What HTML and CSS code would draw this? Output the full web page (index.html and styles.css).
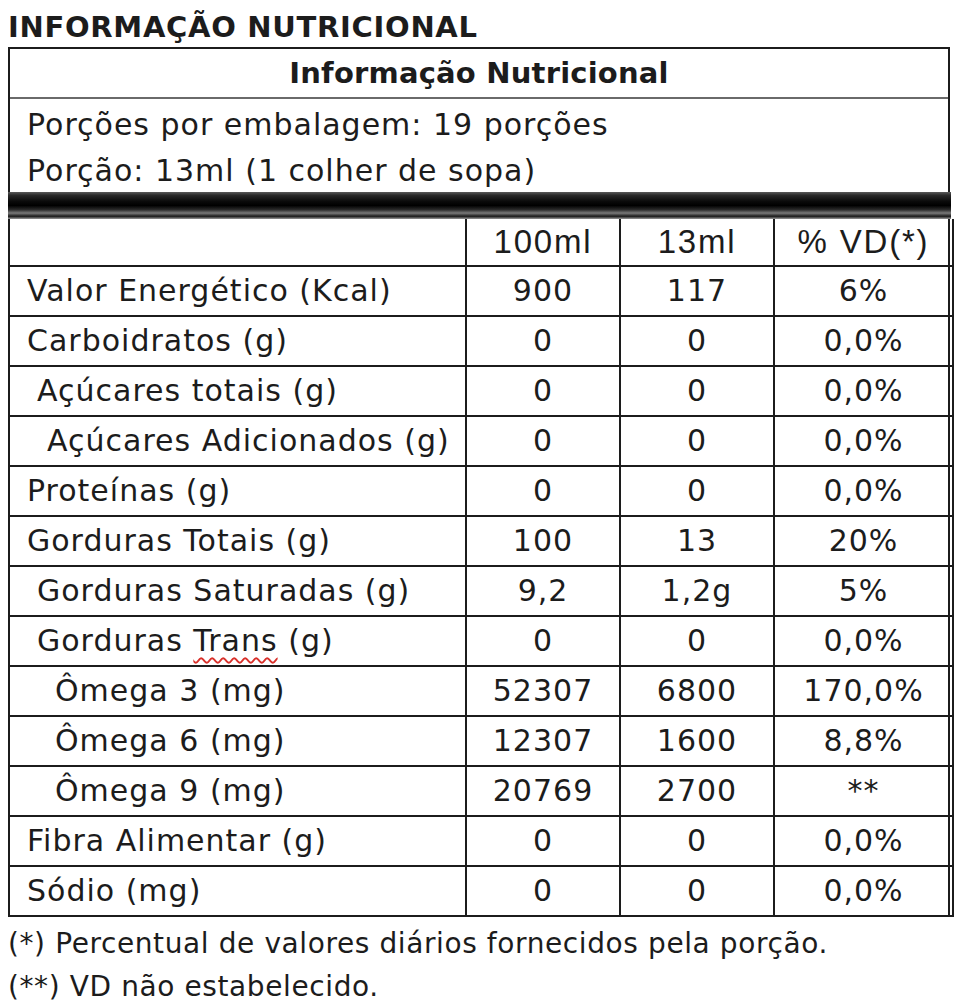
FILE: index.html
```html
<!DOCTYPE html>
<html lang="pt-BR">
<head>
<meta charset="utf-8">
<title>Informação Nutricional</title>
<link rel="stylesheet" href="styles.css">
</head>
<body>
<div class="page">
  <h1 class="title">INFORMAÇÃO NUTRICIONAL</h1>
  <div class="panel">
    <div class="panel-head">Informação Nutricional</div>
    <div class="portion">
      <div class="portion-line">Porções por embalagem: 19 porções</div>
      <div class="portion-line">Porção: 13ml (1 colher de sopa)</div>
    </div>
    <div class="bar"></div>
    <table class="facts">
      <colgroup>
        <col class="c-label"><col class="c-num"><col class="c-num"><col class="c-vd">
      </colgroup>
      <tr class="hdr"><td></td><td>100ml</td><td>13ml</td><td>% VD(*)</td></tr>
      <tr><td class="lbl">Valor Energético (Kcal)</td><td>900</td><td>117</td><td>6%</td></tr>
      <tr><td class="lbl">Carboidratos (g)</td><td>0</td><td>0</td><td>0,0%</td></tr>
      <tr><td class="lbl i1">Açúcares totais (g)</td><td>0</td><td>0</td><td>0,0%</td></tr>
      <tr><td class="lbl i2">Açúcares Adicionados (g)</td><td>0</td><td>0</td><td>0,0%</td></tr>
      <tr><td class="lbl">Proteínas (g)</td><td>0</td><td>0</td><td>0,0%</td></tr>
      <tr><td class="lbl">Gorduras Totais (g)</td><td>100</td><td>13</td><td>20%</td></tr>
      <tr><td class="lbl i1">Gorduras Saturadas (g)</td><td>9,2</td><td>1,2g</td><td>5%</td></tr>
      <tr><td class="lbl i1">Gorduras <span class="spell">Trans</span> (g)</td><td>0</td><td>0</td><td>0,0%</td></tr>
      <tr><td class="lbl i3">Ômega 3 (mg)</td><td>52307</td><td>6800</td><td>170,0%</td></tr>
      <tr><td class="lbl i3">Ômega 6 (mg)</td><td>12307</td><td>1600</td><td>8,8%</td></tr>
      <tr><td class="lbl i3">Ômega 9 (mg)</td><td>20769</td><td>2700</td><td>**</td></tr>
      <tr><td class="lbl">Fibra Alimentar (g)</td><td>0</td><td>0</td><td>0,0%</td></tr>
      <tr><td class="lbl">Sódio (mg)</td><td>0</td><td>0</td><td>0,0%</td></tr>
    </table>
  </div>
  <div class="notes">
    <p>(*) Percentual de valores diários fornecidos pela porção.</p>
    <p>(**) VD não estabelecido.</p>
  </div>
</div>
</body>
</html>
```

FILE: styles.css
```css
* { box-sizing: border-box; }
html, body { margin: 0; padding: 0; background: #fff; }
body {
  font-family: "DejaVu Sans", "Open Sans", sans-serif;
  color: #1c1c1c;
}
.page {
  padding: 8px 6px 0 8px;
  width: 956px;
}
.title {
  margin: 0;
  font-size: 29px;
  font-weight: 700;
  line-height: 39px;
  height: 39px;
  letter-spacing: 0.7px;
}
.panel {
  border: 2px solid #1c1c1c;
  border-bottom: none;
  width: 942px;
}
.panel-head {
  height: 50px;
  line-height: 48px;
  text-align: center;
  font-weight: 700;
  font-size: 29px;
  letter-spacing: 0.2px;
  border-bottom: 2px solid #6a6a6a;
}
.portion {
  padding: 0 0 0 17px;
  height: 93px;
}
.portion-line {
  height: 46px;
  line-height: 52px;
  font-size: 30px;
  letter-spacing: 1px;
}
.bar {
  height: 27px;
  margin: 0 -3px 0 -2px;
  background: linear-gradient(to bottom,
    #5a5a5a 0%, #2a2a2a 12%, #0a0a0a 35%, #000 50%,
    #2c2c2c 66%, #7a7a7a 78%, #1a1a1a 90%, #9a9a9a 100%);
}
.facts {
  border-collapse: collapse;
  width: calc(100% + 2px);
  margin-left: -2px;
  table-layout: fixed;
}
.c-label { width: 457px; }
.c-num { width: 154px; }
.c-vd { width: 179px; }
.facts td {
  border: 2px solid #1c1c1c;
  height: 50px;
  padding: 0;
  text-align: center;
  font-size: 30px;
  letter-spacing: 1px;
  line-height: 46px;
  white-space: nowrap;
}
.facts tr:first-child td { border-top: none; }
.facts .hdr td {
  height: 47px;
  font-family: "Liberation Sans", "Arial", sans-serif;
  font-size: 33px;
  letter-spacing: 1.8px;
}
.facts td.lbl {
  text-align: left;
  padding-left: 17px;
}
.facts td.i1 { padding-left: 27px; }
.facts td.i2 { padding-left: 37px; }
.facts td.i3 { padding-left: 45px; }
.spell {
  text-decoration: underline wavy #d9302a;
  text-decoration-thickness: 1.5px;
  text-underline-offset: 6px;
}
.notes {
  padding-top: 5px;
}
.notes p {
  margin: 0;
  font-size: 28px;
  letter-spacing: 0.6px;
  line-height: 43px;
}
```
